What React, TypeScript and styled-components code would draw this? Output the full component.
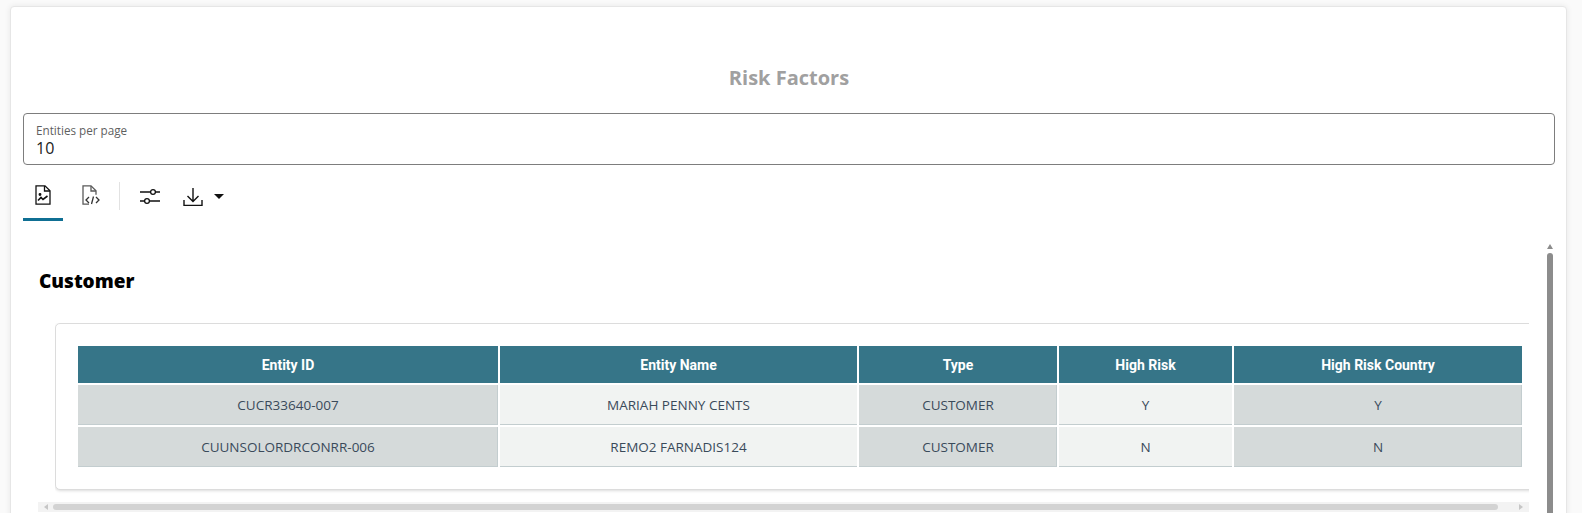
import styled, { createGlobalStyle } from 'styled-components';

const GlobalStyle = createGlobalStyle`
  html, body {
    margin: 0;
    height: 100%;
    overflow: hidden;
    background: #fafafa;
    font-family: "Open Sans", "Noto Sans", sans-serif;
  }
`;

const Page = styled.div`
  height: 513px;
  padding: 6px 15px 0 10px;
  box-sizing: border-box;
`;

const Card = styled.div`
  height: 520px;
  background: #fff;
  border: 1px solid #e6e6e6;
  border-radius: 4px;
  box-shadow: 0 0 6px rgba(0, 0, 0, 0.08);
  padding: 0 11px 0 12px;
  box-sizing: border-box;
  overflow: hidden;
`;

const Title = styled.h2`
  margin: 0;
  padding-top: 57px;
  height: 106px;
  box-sizing: border-box;
  text-align: center;
  font-family: "Open Sans", sans-serif;
  font-size: 20px;
  line-height: 27px;
  font-weight: 700;
  color: #a0a0a0;
`;

const FilterBox = styled.div`
  height: 52px;
  border: 1px solid #7d7d7d;
  border-radius: 4px;
  padding: 9px 12px 0;
  box-sizing: border-box;
`;

const FilterLabel = styled.div`
  font-size: 11.7px;
  line-height: 15px;
  color: #5f5f5f;
`;

const FilterValue = styled.div`
  font-size: 16px;
  line-height: 21px;
  color: #222;
`;

const Toolbar = styled.div`
  display: flex;
  align-items: flex-start;
  height: 56px;
  padding-top: 16px;
  box-sizing: border-box;
`;

const Tab = styled.button<{ $active?: boolean }>`
  width: 40px;
  height: 40px;
  padding: 4px 0 0;
  margin-right: 8px;
  display: flex;
  justify-content: center;
  background: none;
  border: 0;
  border-bottom: 3px solid ${(p) => (p.$active ? '#0f6f93' : 'transparent')};
  box-sizing: border-box;
`;

const Divider = styled.div`
  width: 1px;
  height: 28px;
  margin: 1px 9px 0 0;
  background: #e2e2e2;
`;

const IconButton = styled.button<{ $top: number; $left: number }>`
  padding: ${(p) => p.$top}px 8px 0 ${(p) => p.$left}px;
  display: flex;
  align-items: flex-start;
  background: none;
  border: 0;
`;

const Caret = styled.span`
  width: 0;
  height: 0;
  margin: 7px 0 0 11px;
  border-left: 5px solid transparent;
  border-right: 5px solid transparent;
  border-top: 5px solid #111;
`;

const Content = styled.div`
  display: flex;
  align-items: flex-start;
  padding-top: 21px;
`;

const ScrollPane = styled.div`
  width: 1491px;
  margin-left: 15px;
  flex: none;
`;

const SectionTitle = styled.h3`
  margin: 0;
  padding: 27px 0 0 1px;
  height: 81px;
  box-sizing: border-box;
  font-family: "Open Sans", sans-serif;
  font-size: 19px;
  line-height: 24px;
  font-weight: 800;
  color: #000;
`;

const TableClip = styled.div`
  margin-left: 17px;
  height: 171px;
  overflow: hidden;
`;

const TableCard = styled.div`
  width: 1500px;
  height: 167px;
  padding: 22px 0 0 22px;
  background: #fff;
  border: 1px solid #dcdcdc;
  border-radius: 5px;
  box-shadow: 0 1px 3px rgba(0, 0, 0, 0.14);
  box-sizing: border-box;
`;

const Table = styled.table`
  width: 1446px;
  table-layout: fixed;
  border-collapse: separate;
  border-spacing: 0;
`;

const HeadCell = styled.th<{ $width: number }>`
  width: ${(p) => p.$width}px;
  height: 37px;
  padding: 0;
  border-right: 2px solid #fff;
  box-sizing: border-box;
  background: #367588;
  color: #fff;
  font-family: Roboto, sans-serif;
  font-size: 14px;
  font-weight: 700;
  text-align: center;
`;

const BodyCell = styled.td<{ $shade?: boolean }>`
  height: 42px;
  padding: 0;
  border-top: 2px solid #fff;
  border-right: 2px solid #fff;
  box-sizing: border-box;
  background: ${(p) => (p.$shade ? '#d5dada' : '#f1f3f2')};
  box-shadow: inset ${(p) => (p.$shade ? '-1px' : '0')} -1px 0 #c3cdcf;
  color: #3a4a5a;
  font-size: 13.5px;
  text-align: center;
`;

const HScrollbar = styled.div`
  position: relative;
  display: flex;
  align-items: center;
  height: 10px;
  margin-top: 8px;
  background: #f3f3f3;

  &::before,
  &::after {
    content: '';
    position: absolute;
    top: 2px;
    border-top: 3px solid transparent;
    border-bottom: 3px solid transparent;
  }

  &::before {
    left: 6px;
    border-right: 4px solid #c6c6c6;
  }

  &::after {
    right: 6px;
    border-left: 4px solid #c6c6c6;
  }
`;

const HThumb = styled.div`
  width: 1445px;
  height: 6px;
  margin-left: 15px;
  border-radius: 3px;
  background: #d3d3d3;
`;

const VScrollbar = styled.div`
  width: 6px;
  height: 300px;
  margin: 11px 0 0 18px;
  flex: none;
  position: relative;
  background: #8c8c8c;
  border-radius: 3px 3px 0 0;

  &::before {
    content: '';
    position: absolute;
    top: -9px;
    left: 0;
    border-left: 3px solid transparent;
    border-right: 3px solid transparent;
    border-bottom: 5px solid #8c8c8c;
  }
`;

const FileChartIcon = () => (
  <svg width="16" height="20" viewBox="0 0 16 20" fill="none" stroke="#111" strokeWidth="1.3">
    <path d="M1 .8h9l5 5v13.4H1z" />
    <path d="M9.500 1v5H15" />
    <path d="M3 15.500l3-3 2 2 4.500-3.500" strokeWidth="1.6" />
    <circle cx="5" cy="9.500" r="0.8" fill="#111" />
  </svg>
);

const FileCodeIcon = () => (
  <svg width="18" height="20" viewBox="0 0 18 20" fill="none" stroke="#5a5a5a" strokeWidth="1.3">
    <path d="M7 19.200H1V.8h8l5 5v4" />
    <path d="M9 1v5h5" />
    <path d="M7 12l-3 3 3 3M14 12l3 3-3 3M11.500 11.500l-2 7.500" stroke="#333" />
  </svg>
);

const SlidersIcon = () => (
  <svg width="22" height="18" viewBox="0 0 22 18" fill="none" stroke="#111" strokeWidth="1.3">
    <path d="M1 4h10.600M16.400 4H21M1 13h4.600M10.400 13H21" />
    <circle cx="14" cy="4" r="2.400" />
    <circle cx="8" cy="13" r="2.400" />
  </svg>
);

const DownloadIcon = () => (
  <svg width="20" height="20" viewBox="0 0 20 20" fill="none" stroke="#111" strokeWidth="1.4">
    <path d="M10 1v13M4.500 9l5.500 5.500L15.500 9" />
    <path d="M1 13v5.400h18V13" />
  </svg>
);

const columns = [
  { label: 'Entity ID', width: 422 },
  { label: 'Entity Name', width: 359 },
  { label: 'Type', width: 200 },
  { label: 'High Risk', width: 175 },
  { label: 'High Risk Country', width: 290 },
];

const rows = [
  ['CUCR33640-007', 'MARIAH PENNY CENTS', 'CUSTOMER', 'Y', 'Y'],
  ['CUUNSOLORDRCONRR-006', 'REMO2 FARNADIS124', 'CUSTOMER', 'N', 'N'],
];

const App = () => {
  return (
    <Page>
      <GlobalStyle />
      <Card>
        <Title>Risk Factors</Title>
        <FilterBox>
          <FilterLabel>Entities per page</FilterLabel>
          <FilterValue>10</FilterValue>
        </FilterBox>
        <Toolbar>
          <Tab $active>
            <FileChartIcon />
          </Tab>
          <Tab>
            <FileCodeIcon />
          </Tab>
          <Divider />
          <IconButton $top={7} $left={10}>
            <SlidersIcon />
          </IconButton>
          <IconButton $top={6} $left={14}>
            <DownloadIcon />
            <Caret />
          </IconButton>
        </Toolbar>
        <Content>
          <ScrollPane>
            <SectionTitle>Customer</SectionTitle>
            <TableClip>
              <TableCard>
                <Table>
                  <thead>
                    <tr>
                      {columns.map((col) => (
                        <HeadCell key={col.label} $width={col.width}>
                          {col.label}
                        </HeadCell>
                      ))}
                    </tr>
                  </thead>
                  <tbody>
                    {rows.map((row) => (
                      <tr key={row[0]}>
                        {row.map((cell, i) => (
                          <BodyCell key={i} $shade={i % 2 === 0}>
                            {cell}
                          </BodyCell>
                        ))}
                      </tr>
                    ))}
                  </tbody>
                </Table>
              </TableCard>
            </TableClip>
            <HScrollbar>
              <HThumb />
            </HScrollbar>
          </ScrollPane>
          <VScrollbar />
        </Content>
      </Card>
    </Page>
  );
};

export default App;
